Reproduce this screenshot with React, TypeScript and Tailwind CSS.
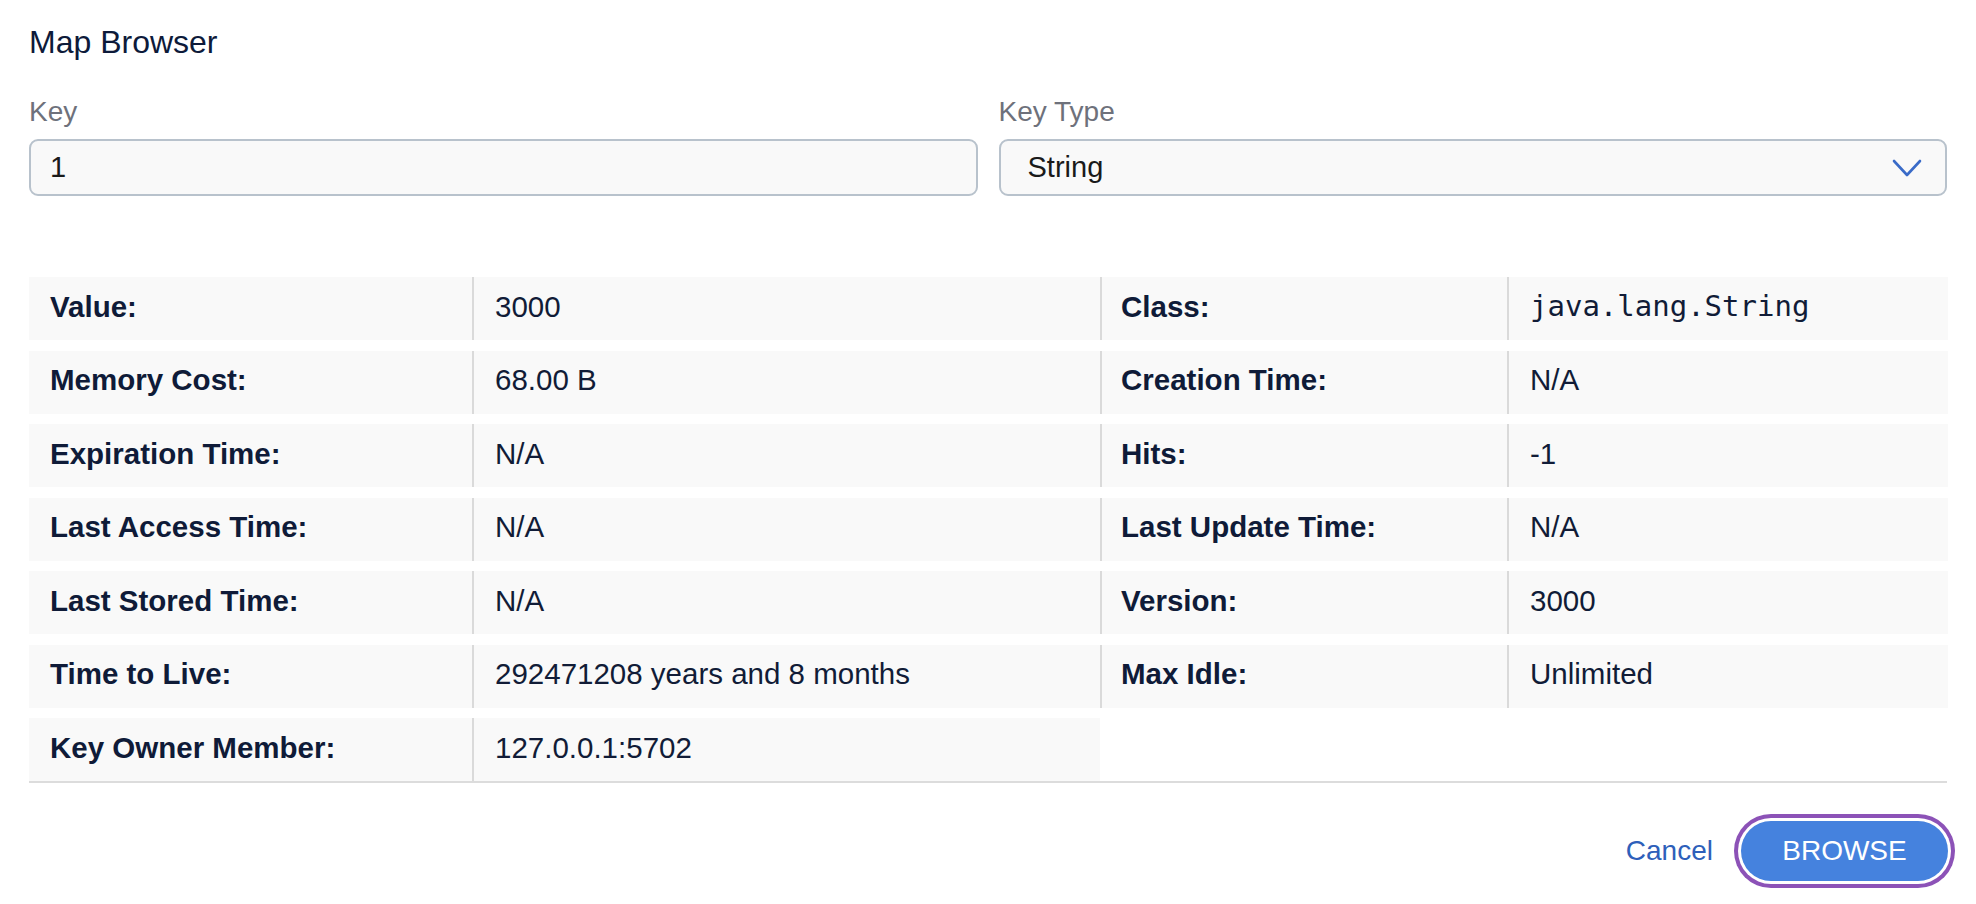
type Cell = { label: string; value: string; mono?: boolean };

const rows: Array<[Cell, Cell | null]> = [
  [
    { label: "Value:", value: "3000" },
    { label: "Class:", value: "java.lang.String", mono: true },
  ],
  [
    { label: "Memory Cost:", value: "68.00 B" },
    { label: "Creation Time:", value: "N/A" },
  ],
  [
    { label: "Expiration Time:", value: "N/A" },
    { label: "Hits:", value: "-1" },
  ],
  [
    { label: "Last Access Time:", value: "N/A" },
    { label: "Last Update Time:", value: "N/A" },
  ],
  [
    { label: "Last Stored Time:", value: "N/A" },
    { label: "Version:", value: "3000" },
  ],
  [
    { label: "Time to Live:", value: "292471208 years and 8 months" },
    { label: "Max Idle:", value: "Unlimited" },
  ],
  [{ label: "Key Owner Member:", value: "127.0.0.1:5702" }, null],
];

function LabelCell({ text, divider }: { text: string; divider?: boolean }) {
  return (
    <div
      className={`flex items-center h-[63px] bg-[#f9f9f9] pb-[3px] font-bold text-[29.5px] text-[#0f1b38] ${
        divider ? "border-l-2 border-[#dadada] pl-[19px]" : "pl-[21px]"
      }`}
    >
      {text}
    </div>
  );
}

function ValueCell({ text, mono }: { text: string; mono?: boolean }) {
  return (
    <div className="flex items-center h-[63px] bg-[#f9f9f9] border-l-2 border-[#dadada] pl-[21px] pb-[3px] text-[#111c37]">
      {mono ? (
        <span className="font-['DejaVu_Sans_Mono',monospace] text-[29px]">{text}</span>
      ) : (
        <span className="text-[29.5px]">{text}</span>
      )}
    </div>
  );
}

function Chevron() {
  return (
    <svg width="30" height="18" viewBox="0 0 30 18" fill="none" className="text-[#3a6bc8]">
      <polyline
        points="2,2 15,16 28,2"
        stroke="currentColor"
        strokeWidth="2.6"
        strokeLinecap="round"
        strokeLinejoin="round"
      />
    </svg>
  );
}

export default function App() {
  return (
    <div className="w-[1976px] h-[904px] bg-white px-[29px] pt-[23px] font-['Liberation_Sans',Arial,sans-serif] overflow-hidden">
      <h1 className="text-[32px] leading-[38px] text-[#0d1a3a]">Map Browser</h1>

      <div className="mt-[34px] grid grid-cols-2 gap-[21px]">
        <div>
          <label className="block text-[28px] leading-[34px] text-[#6e717b]">Key</label>
          <div className="mt-[10px] flex items-center h-[57px] rounded-[9px] border-2 border-[#b8c2cc] bg-[#f9f9f9] pl-[19px] text-[29px] text-[#1a1a1a]">
            1
          </div>
        </div>
        <div>
          <label className="block text-[28px] leading-[34px] text-[#6e717b]">Key Type</label>
          <div className="mt-[10px] flex items-center justify-between h-[57px] rounded-[9px] border-2 border-[#b8c2cc] bg-[#f9f9f9] pl-[27px] pr-[23px] text-[29px] text-[#1a1a1a]">
            <span>String</span>
            <Chevron />
          </div>
        </div>
      </div>

      <div className="mt-[81px] flex flex-col gap-[10.5px]">
        {rows.map(([left, right], i) => (
          <div key={i} className="grid grid-cols-[443px_628px_407px_441px]">
            <LabelCell text={left.label} />
            <ValueCell text={left.value} mono={left.mono} />
            {right ? (
              <>
                <LabelCell text={right.label} divider />
                <ValueCell text={right.value} mono={right.mono} />
              </>
            ) : null}
          </div>
        ))}
      </div>
      <div className="h-[2px] bg-[#dcdcdc]" />

      <div className="mt-[38px] flex items-center justify-end">
        <button type="button" className="text-[28px] text-[#2e5fba] mr-[28px]">
          Cancel
        </button>
        <button
          type="button"
          className="w-[207px] h-[60px] -mr-[1px] rounded-full bg-[#4582de] text-white text-[28px] shadow-[0_0_0_3px_#fff,0_0_0_7px_#8c52b7]"
        >
          BROWSE
        </button>
      </div>
    </div>
  );
}
